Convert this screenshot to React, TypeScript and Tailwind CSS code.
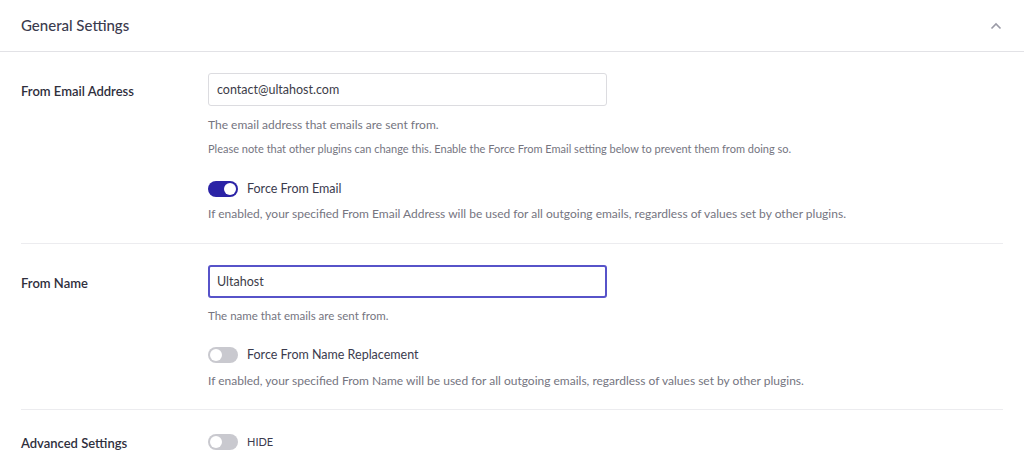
import { useState } from 'react'

function Toggle({ on, onChange }: { on: boolean; onChange: () => void }) {
  return (
    <button
      type="button"
      onClick={onChange}
      className={`relative h-[16px] w-[30px] shrink-0 rounded-full transition-colors ${on ? 'bg-[#2b23a6]' : 'bg-[#c9c9cf]'}`}
    >
      <span
        className={`absolute top-[2px] h-[12px] w-[12px] rounded-full bg-white transition-all ${on ? 'left-[16px]' : 'left-[2px]'}`}
      />
    </button>
  )
}

const help = 'leading-[16px] text-[#75757f]'

export default function App() {
  const [forceEmail, setForceEmail] = useState(true)
  const [forceName, setForceName] = useState(false)
  const [advanced, setAdvanced] = useState(false)

  return (
    <div className="min-h-[471px] w-[1024px] bg-white font-['Lato',sans-serif] text-[#2f2f3d]">
      <div className="flex h-[52px] items-center justify-between border-b border-[#e2e2e6] pl-[21px] pr-[22px]">
        <div className="text-[15px] font-medium text-[#3b3b4e]">General Settings</div>
        <svg width="12" height="8" viewBox="0 0 12 8" className="text-[#9a9aa6]">
          <path d="M1.5 6.5 6 2l4.5 4.5" fill="none" stroke="currentColor" strokeWidth="1.6" />
        </svg>
      </div>

      <div className="px-[21px]">
        <div className="flex border-b border-[#ececef] pt-[21px] pb-[21px]">
          <div className="flex h-[33px] w-[187px] shrink-0 items-center pt-[5px] text-[13px] font-semibold">From Email Address</div>
          <div className="flex-1">
            <input
              defaultValue="contact@ultahost.com"
              className="h-[33px] w-[399px] rounded-[3px] border border-[#dcdce0] px-[8px] text-[12.5px] text-[#3c3c48] outline-none"
            />
            <p className={`mt-[11px] text-[12px] ${help}`}>The email address that emails are sent from.</p>
            <p className={`mt-[8px] text-[11px] ${help}`}>
              Please note that other plugins can change this. Enable the Force From Email setting below to prevent them from doing so.
            </p>
            <div className="mt-[22px] flex h-[20px] items-center gap-[9px]">
              <Toggle on={forceEmail} onChange={() => setForceEmail(!forceEmail)} />
              <span className="text-[12.5px] text-[#3b3b4e]">Force From Email</span>
            </div>
            <p className={`mt-[7px] text-[12px] ${help}`}>
              If enabled, your specified From Email Address will be used for all outgoing emails, regardless of values set by other plugins.
            </p>
          </div>
        </div>

        <div className="flex border-b border-[#ececef] pt-[21px] pb-[20px]">
          <div className="flex h-[33px] w-[187px] shrink-0 items-center pt-[5px] text-[13px] font-semibold">From Name</div>
          <div className="flex-1">
            <input
              defaultValue="Ultahost"
              className="h-[33px] w-[399px] rounded-[3px] border-2 border-[#5753c9] px-[7px] text-[12.5px] text-[#3c3c48] outline-none"
            />
            <p className={`mt-[10px] text-[11.5px] ${help}`}>The name that emails are sent from.</p>
            <div className="mt-[21px] flex h-[20px] items-center gap-[9px]">
              <Toggle on={forceName} onChange={() => setForceName(!forceName)} />
              <span className="text-[12.5px] text-[#3b3b4e]">Force From Name Replacement</span>
            </div>
            <p className={`mt-[8px] text-[12px] ${help}`}>
              If enabled, your specified From Name will be used for all outgoing emails, regardless of values set by other plugins.
            </p>
          </div>
        </div>

        <div className="flex items-center pt-[21px]">
          <div className="w-[187px] shrink-0 pt-[3px] text-[13px] font-semibold">Advanced Settings</div>
          <div className="flex items-center gap-[9px]">
            <Toggle on={advanced} onChange={() => setAdvanced(!advanced)} />
            <span className="text-[11px] text-[#3b3b4e]">{advanced ? 'SHOW' : 'HIDE'}</span>
          </div>
        </div>
      </div>
    </div>
  )
}
